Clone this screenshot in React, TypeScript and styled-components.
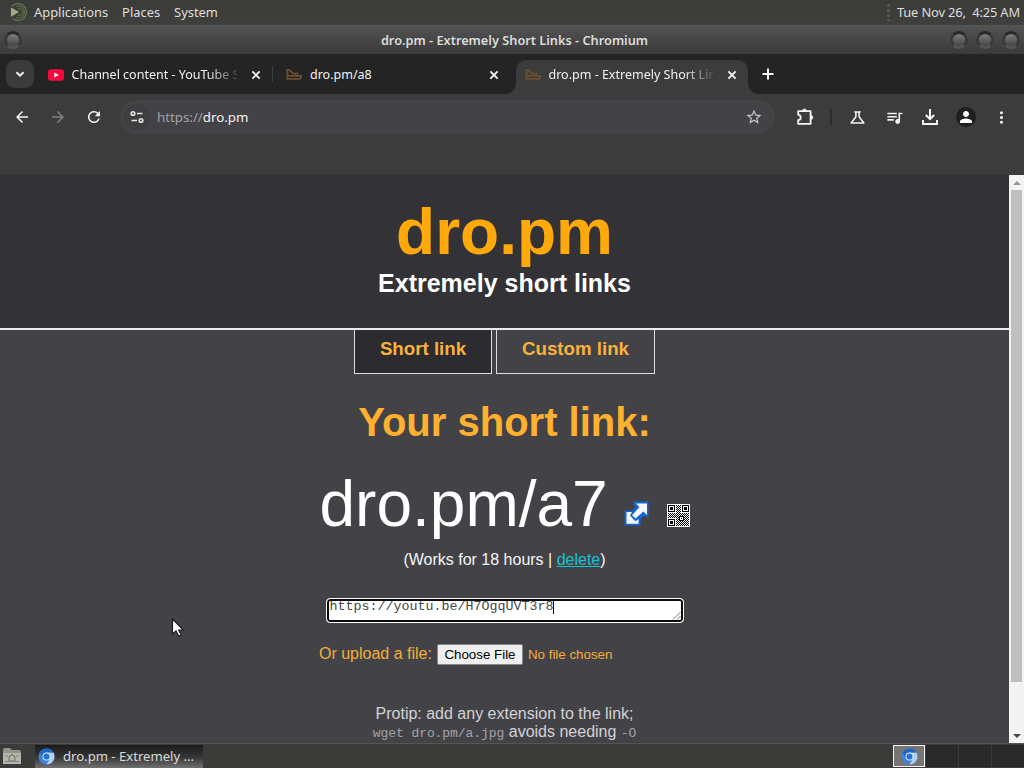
import React from "react";
import styled, { createGlobalStyle } from "styled-components";
import {
  MdArrowBack,
  MdArrowForward,
  MdRefresh,
  MdStarBorder,
  MdOutlineScience,
  MdQueueMusic,
  MdPerson,
  MdMoreVert,
} from "react-icons/md";

const GlobalStyle = createGlobalStyle`
  * { box-sizing: border-box; }
  html, body { margin: 0; padding: 0; }
  body { overflow: hidden; background: #3c3c3c; }
`;

const Desktop = styled.div`
  position: relative;
  display: flex;
  flex-direction: column;
  width: 1024px;
  height: 768px;
  overflow: hidden;
  font-family: "Noto Sans", sans-serif;
  font-size: 13.33px;
  color: #f2f2f2;
`;

const TopPanel = styled.header`
  display: flex;
  align-items: center;
  flex: 0 0 25px;
  padding: 0 4px 1px 9px;
  background: linear-gradient(#3b3b39, #3f3f3d);
  color: #dededc;
  font-size: 12.9px;
  white-space: pre;
`;

const MenuItem = styled.span<{ $gap: number }>`
  margin-left: ${(p) => p.$gap}px;
  line-height: 24px;
`;

const Handle = styled.span`
  width: 3px;
  height: 17px;
  margin-left: auto;
  margin-right: 7px;
  background: repeating-linear-gradient(#555553 0 3px, #3c3c3a 3px 5px);
`;

const Clock = styled.span`
  letter-spacing: -0.15px;
`;

const TitleBar = styled.div`
  display: flex;
  align-items: center;
  justify-content: space-between;
  flex: 0 0 29px;
  padding: 0 4px 0 4px;
  background: linear-gradient(#545454, #494949 40%, #3a3a3a);
  color: #dcdcdc;
  font-size: 12.75px;
  font-weight: 600;
`;

const TitleSide = styled.div<{ $end?: boolean }>`
  display: flex;
  width: 110px;
  gap: 8px;
  justify-content: ${(p) => (p.$end ? "flex-end" : "flex-start")};
  margin-right: ${(p) => (p.$end ? 0 : 5)}px;
`;

const Orb = styled.span`
  width: 18px;
  height: 18px;
  border-radius: 50%;
  border: 3px solid #3a3a3a;
  border-top-color: #282828;
  border-bottom-color: #555;
  background: linear-gradient(#7e7e7c, #444);
`;

const TabStrip = styled.nav`
  display: flex;
  align-items: flex-end;
  flex: 0 0 40px;
  padding-left: 6px;
  background: #242424;
`;

const TabSearch = styled.div`
  display: grid;
  place-items: center;
  width: 28px;
  height: 28px;
  margin-bottom: 6px;
  border-radius: 9px;
  background: #3b3b3b;
`;

const Tab = styled.div<{ $active?: boolean; $width: number; $left: number }>`
  position: relative;
  display: flex;
  align-items: center;
  width: ${(p) => p.$width}px;
  height: 34px;
  margin-left: ${(p) => p.$left}px;
  padding: 0 9px 5px;
  border-radius: 10px 10px 0 0;
  background: ${(p) => (p.$active ? "#3c3c3c" : "transparent")};
  font-size: 12.5px;

  &::before,
  &::after {
    content: "";
    display: ${(p) => (p.$active ? "block" : "none")};
    position: absolute;
    bottom: 0;
    width: 10px;
    height: 10px;
  }
  &::before {
    left: -10px;
    background: radial-gradient(circle at 0 0, #242424 9.5px, #3c3c3c 10px);
  }
  &::after {
    right: -10px;
    background: radial-gradient(circle at 100% 0, #242424 9.5px, #3c3c3c 10px);
  }
`;

const TabLabel = styled.span<{ $fade?: boolean }>`
  flex: 1;
  min-width: 0;
  margin: 0 12px 0 ${(p) => (p.$fade ? 7.5 : 8)}px;
  overflow: hidden;
  white-space: nowrap;
  line-height: 20px;
  ${(p) => p.$fade && "mask-image: linear-gradient(to right, #000 82%, transparent 103%);"}
`;

const TabDivider = styled.span`
  width: 1px;
  height: 16px;
  margin-bottom: 12px;
  background: #3d3d3d;
`;

const NewTab = styled.div`
  display: grid;
  margin: 0 0 14px 14px;
`;

const Toolbar = styled.div`
  display: flex;
  align-items: center;
  flex: 0 0 46px;
  padding-left: 13px;
  background: #3c3c3c;

  & > svg { flex: none; }
`;

const NavIcons = styled.div`
  display: flex;
  gap: 18px;
  color: #f4f4f4;
  & > :nth-child(2) { color: #808080; }
`;

const AddressBar = styled.div`
  display: flex;
  align-items: center;
  width: 655px;
  height: 34px;
  margin-left: 17px;
  padding: 0 12px 0 4px;
  border-radius: 17px;
  background: #434347;
  font-size: 13.3px;
`;

const SiteInfo = styled.span`
  display: grid;
  place-items: center;
  width: 26px;
  height: 26px;
  margin-right: 7px;
  border-radius: 50%;
  background: #3e3e40;
`;

const Scheme = styled.span`
  color: #a2a2a4;
`;

const StarSlot = styled.span`
  display: grid;
  margin-left: auto;
  color: #c8c8cc;
`;

const ToolIcons = styled.div`
  display: flex;
  align-items: center;
  gap: 17.5px;
  margin-left: 16px;
`;

const ExtSlot = styled.span`
  display: grid;
  margin-left: 21px;
`;

const ToolDivider = styled.span`
  width: 2px;
  height: 16px;
  margin-left: 16px;
  background: #2c2c2c;
`;

const Avatar = styled.span`
  display: grid;
  place-items: center;
  width: 20px;
  height: 20px;
  margin: 0 -1px;
  border-radius: 50%;
  background: #1f1f1f;
  color: #fff;
`;

const BookmarkSpace = styled.div`
  flex: 0 0 34px;
  background: #3c3c3c;
`;

const Viewport = styled.div`
  display: flex;
  flex: 0 0 569px;
  overflow: hidden;
`;

const Page = styled.main`
  width: 1009px;
  background: #434347;
  font-family: "Liberation Sans", Arial, sans-serif;
  font-size: 16px;
  text-align: center;
  overflow: hidden;
`;

const Banner = styled.section`
  height: 156px;
  padding-top: 21px;
  border-bottom: 2px solid #ececee;
  background: #323237;
`;

const SiteName = styled.h1`
  margin: 0;
  color: #ffa90a;
  font-size: 64px;
  line-height: 74px;
`;

const Tagline = styled.h2`
  margin: 0;
  color: #fff;
  font-size: 25px;
  line-height: 29px;
`;

const ModeTabs = styled.div`
  display: flex;
  justify-content: center;
  gap: 4px;
  height: 44px;
`;

const ModeTab = styled.div<{ $selected?: boolean; $width: number }>`
  width: ${(p) => p.$width}px;
  height: 44px;
  border: 1px solid #dcdce0;
  border-top: 0;
  background: ${(p) => (p.$selected ? "#2b2b30" : "transparent")};
  color: #f9b13c;
  font-size: 18.72px;
  font-weight: bold;
  line-height: 38px;
`;

const ResultTitle = styled.h2`
  margin: 24px 0 0;
  color: #ffb02e;
  font-size: 40px;
  line-height: 48px;
`;

const LinkRow = styled.div`
  display: flex;
  align-items: flex-start;
  width: 370px;
  margin: 21px auto 0;
  height: 74px;
  color: #fff;
  font-size: 64px;
  line-height: 74px;
`;

const OpenSlot = styled.span`
  display: grid;
  margin: 33px 18px 0 16px;
`;

const QrSlot = styled.span`
  display: grid;
  margin-top: 37px;
`;

const Expiry = styled.p`
  margin: 9px 0 0;
  color: #f5f5f7;
  line-height: 20px;
`;

const DeleteLink = styled.span`
  color: #14c3d0;
  text-decoration: underline;
`;

const UrlField = styled.div`
  position: relative;
  display: flex;
  width: 358px;
  height: 25px;
  margin: 28px auto 0;
  padding: 0 2px 0 3px;
  border: 1px solid #fff;
  border-radius: 4px;
  background: #fff;
  box-shadow: inset 0 0 0 2px #0c0c0e;
  color: #484848;
  font-family: "Liberation Mono", monospace;
  font-size: 13.33px;
  line-height: 15px;
`;

const Caret = styled.span`
  width: 1px;
  height: 13px;
  margin-top: 2px;
  background: #000;
`;

const Grip = styled.svg`
  position: absolute;
  right: 2px;
  bottom: 2px;
`;

const UploadRow = styled.div`
  display: flex;
  align-items: center;
  width: 371px;
  height: 22px;
  margin: 20px auto 0;
  color: #f3ad38;
`;

const FileButton = styled.span`
  width: 86px;
  height: 21px;
  margin: 1px 5px 0 5px;
  border: 1px solid #88888a;
  border-radius: 2px;
  background: #efefef;
  color: #000;
  font-size: 13.33px;
  line-height: 19px;
`;

const FileStatus = styled.span`
  margin-top: 1px;
  font-size: 13.33px;
`;

const Protip = styled.p`
  margin: 40px 0 0;
  color: #d2d2d6;
  line-height: 18px;
`;

const Code = styled.code`
  color: #a2a2a6;
  font-family: "Liberation Mono", monospace;
  font-size: 13px;
  letter-spacing: -0.06px;
`;

const Scrollbar = styled.aside`
  display: flex;
  flex-direction: column;
  align-items: center;
  justify-content: space-between;
  width: 15px;
  margin-top: 1px;
  background: #f3f3f3;
`;

const Thumb = styled.div`
  width: 11px;
  height: 492px;
  margin-bottom: auto;
  background: #bfbfbf;
`;

const ScrollArrow = styled.div<{ $down?: boolean }>`
  display: grid;
  place-items: center;
  width: 15px;
  height: 15px;
  &::after {
    content: "";
    border: 4px solid transparent;
    border-top-width: ${(p) => (p.$down ? 4 : 0)}px;
    border-bottom-width: ${(p) => (p.$down ? 0 : 4)}px;
    border-top-color: #444;
    border-bottom-color: #999;
  }
`;

const BottomPanel = styled.footer`
  display: flex;
  align-items: center;
  flex: 0 0 25px;
  padding-left: 2px;
  border-top: 1px solid #555553;
  background: #3b3b39;
`;

const TaskButton = styled.div`
  display: flex;
  align-items: center;
  gap: 8px;
  width: 168px;
  height: 23px;
  margin-left: 13px;
  padding-left: 3px;
  background: linear-gradient(#1c1c1c, #333 50%, #707070);
  color: #d9d9d9;
  font-size: 13.1px;
  white-space: nowrap;
`;

const Pager = styled.div`
  display: flex;
  align-items: center;
  gap: 1px;
  margin-left: auto;
  height: 24px;
  background: #3a3a3a;
`;

const Workspace = styled.div<{ $current?: boolean }>`
  display: grid;
  place-items: center;
  width: 32px;
  height: 22px;
  border: ${(p) => (p.$current ? "1px solid #f5f5f5" : "0")};
  background: ${(p) => (p.$current ? "#777573" : "#292929")};
`;

const Pointer = styled.svg`
  position: absolute;
  left: 171px;
  top: 618px;
`;

const MateLogo = () => (
  <svg width="20" height="20" viewBox="0 0 20 20" fill="none">
    <path d="M3 4 A8.5 8.5 0 1 1 4 17" stroke="#64774b" strokeWidth="1.2" />
    <path d="M7 4.5 A6 6 0 1 1 7 15.5" stroke="#596b43" strokeWidth="1.3" />
    <path d="M9 7 A3.4 3.4 0 1 1 9 13.2" stroke="#64774b" strokeWidth="1" />
    <path d="M2 5.5 L10 10 L2 14.8 Z" fill="#a4ab82" />
  </svg>
);

const ChevronIcon = () => (
  <svg width="10" height="10" viewBox="0 0 10 10" fill="none" stroke="#f2f2f2" strokeWidth="2">
    <path d="M1.5 3.2 L5 6.7 L8.5 3.2" />
  </svg>
);

const CloseIcon = () => (
  <svg width="14" height="14" viewBox="0 0 14 14" fill="none" stroke="#f4f4f4" strokeWidth="1.9">
    <path d="M3.4 3.4 L10.6 10.6 M10.6 3.4 L3.4 10.6" />
  </svg>
);

const PlusIcon = () => (
  <svg width="12" height="12" viewBox="0 0 12 12" fill="none" stroke="#f4f4f4" strokeWidth="2">
    <path d="M6 0.5 V11.5 M0.5 6 H11.5" />
  </svg>
);

const PuzzleIcon = () => (
  <svg width="18" height="18" viewBox="0 0 18 18" fill="none" stroke="#f5f5f5" strokeWidth="1.8">
    <path
      d="M2.2 3.2 H14.6 V15.8 H2.2 V12.2 C5.6 11.8 5.6 7.2 2.2 6.8 Z"
      strokeLinejoin="round"
    />
    <path d="M6.3 3 A2.1 2.1 0 0 1 10.5 3 Z M14.8 7.4 A2.1 2.1 0 0 1 14.8 11.6 Z" fill="#f5f5f5" strokeWidth="0.5" />
  </svg>
);

const YouTubeIcon = () => (
  <svg width="16" height="16" viewBox="0 0 16 16">
    <rect x="0" y="2.3" width="16" height="11.4" rx="3" fill="#f5093c" />
    <path d="M6.3 5.4 L10.8 8 L6.3 10.6 Z" fill="#fff" />
  </svg>
);

const DroIcon = () => (
  <svg width="16" height="16" viewBox="0 0 16 16" fill="none" stroke="#6a5032" strokeWidth="1.8">
    <path d="M0 3.2 H3.5 L7.5 6.6 H11 L12.5 6" />
    <path d="M1.4 3.5 V11.8 H14.5 M2 8.8 H16 M14.8 8.6 V12" />
  </svg>
);

const TuneIcon = () => (
  <svg width="16" height="16" viewBox="0 0 16 16" fill="none" stroke="#e6e6e6" strokeWidth="1.6">
    <circle cx="4" cy="4.5" r="1.8" />
    <path d="M8 4.5 H13.5 M2.5 11.5 H8" />
    <circle cx="12" cy="11.5" r="1.8" />
  </svg>
);

const DownloadIcon = () => (
  <svg width="18" height="18" viewBox="0 0 18 18" fill="none" stroke="#f5f5f5" strokeWidth="2">
    <path d="M9 1 V11 M4.8 7 L9 11.2 L13.2 7 M2 12 V16 H16 V12" />
  </svg>
);

const OpenIcon = () => (
  <svg width="25" height="27" viewBox="0 0 25 27">
    <path
      d="M9 2 H24 V17 L20 15 L16 19 V25 H1 V11 H8 L12 7 Z"
      fill="#1464d2"
      stroke="#1464d2"
      strokeLinejoin="round"
    />
    <path d="M2.5 12 H8 L6 15.5 L10.5 20.5 L12 21 L14.5 19 V23.8 H2.5 Z" fill="#f4faff" />
    <path d="M12 3.5 H23 V15 L19.4 11.5 L11.5 18.6 L8 15.2 L15.4 7.2 Z" fill="#f4faff" />
  </svg>
);

const QR_SIZE = 23;
const inSquare = (x: number, y: number, left: number, top: number, size: number) =>
  x >= left && x < left + size && y >= top && y < top + size;
const ringDark = (x: number, y: number, left: number, top: number, size: number) => {
  const edge = Math.min(x - left, y - top, left + size - 1 - x, top + size - 1 - y);
  return edge === 0 || edge > 1;
};

const qrDark = (x: number, y: number) => {
  if (x === 0 || y === 0 || x === QR_SIZE - 1 || y === QR_SIZE - 1) return false;
  const finders = [
    [1, 1],
    [15, 1],
    [1, 15],
  ];
  for (const [l, t] of finders) {
    if (inSquare(x, y, l, t, 7)) return ringDark(x, y, l, t, 7);
    if (inSquare(x, y, l - 1, t - 1, 9)) return false;
  }
  if (inSquare(x, y, 12, 12, 5)) return ringDark(x, y, 12, 12, 5);
  return (x + y) % 2 === 0;
};

const QrIcon = () => (
  <svg width="23" height="23" viewBox="0 0 23 23" shapeRendering="crispEdges">
    <rect width="23" height="23" fill="#fff" />
    {Array.from({ length: QR_SIZE * QR_SIZE }, (_, i) => [i % QR_SIZE, Math.floor(i / QR_SIZE)])
      .filter(([x, y]) => qrDark(x, y))
      .map(([x, y]) => (
        <rect key={`${x}-${y}`} x={x} y={y} width="1" height="1" fill="#000" />
      ))}
  </svg>
);

const ChromiumIcon = () => (
  <svg width="17" height="17" viewBox="0 0 17 17">
    <circle cx="8.5" cy="8.5" r="8" fill="#3f82d8" />
    <path d="M8.5 4.6 H15.5 A8 8 0 0 1 8.5 16.5 L12 10.5 Z" fill="#b2d0f5" />
    <path d="M1.6 4.5 A8 8 0 0 1 15.5 4.6 H8.5 L5 10.5 Z" fill="#2266c4" />
    <circle cx="8.5" cy="8.5" r="4" fill="#e6f0fc" />
    <circle cx="8.5" cy="8.5" r="3.1" fill="#2372d5" />
  </svg>
);

const FilesIcon = () => (
  <svg width="20" height="18" viewBox="0 0 20 18">
    <path d="M1 3 Q1 1 3 1 H8 L10 3 H17 Q19 3 19 5 V17 H1 Z" fill="#92948a" />
    <path d="M1 6 H19 V17 H1 Z" fill="#b4b6aa" />
    <path d="M7 14 V10 L10 7.5 L13 10 V14 Z" fill="none" stroke="#77796f" strokeWidth="1.2" />
    <path d="M3 9 H6 M3 14.5 H17 M14 9 H17" stroke="#85877c" />
  </svg>
);

export default function App() {
  return (
    <Desktop>
      <GlobalStyle />
      <TopPanel>
        <MateLogo />
        <MenuItem $gap={5}>Applications</MenuItem>
        <MenuItem $gap={14}>Places</MenuItem>
        <MenuItem $gap={14}>System</MenuItem>
        <Handle />
        <Clock>Tue Nov 26,  4:25 AM</Clock>
      </TopPanel>

      <TitleBar>
        <TitleSide>
          <Orb />
        </TitleSide>
        <span>dro.pm - Extremely Short Links - Chromium</span>
        <TitleSide $end>
          <Orb />
          <Orb />
          <Orb />
        </TitleSide>
      </TitleBar>

      <TabStrip>
        <TabSearch>
          <ChevronIcon />
        </TabSearch>
        <Tab $width={233} $left={5}>
          <YouTubeIcon />
          <TabLabel $fade>Channel content - YouTube S</TabLabel>
          <CloseIcon />
        </Tab>
        <TabDivider />
        <Tab $width={233} $left={4}>
          <DroIcon />
          <TabLabel>dro.pm/a8</TabLabel>
          <CloseIcon />
        </Tab>
        <Tab $active $width={232} $left={6}>
          <DroIcon />
          <TabLabel $fade>dro.pm - Extremely Short Links</TabLabel>
          <CloseIcon />
        </Tab>
        <NewTab>
          <PlusIcon />
        </NewTab>
      </TabStrip>

      <Toolbar>
        <NavIcons>
          <MdArrowBack size={18} />
          <MdArrowForward size={18} />
          <MdRefresh size={18} />
        </NavIcons>
        <AddressBar>
          <SiteInfo>
            <TuneIcon />
          </SiteInfo>
          <Scheme>https://</Scheme>
          <span>dro.pm</span>
          <StarSlot>
            <MdStarBorder size={18} />
          </StarSlot>
        </AddressBar>
        <ExtSlot>
          <PuzzleIcon />
        </ExtSlot>
        <ToolDivider />
        <ToolIcons>
          <MdOutlineScience size={19} />
          <MdQueueMusic size={19} />
          <DownloadIcon />
          <Avatar>
            <MdPerson size={18} />
          </Avatar>
          <MdMoreVert size={19} />
        </ToolIcons>
      </Toolbar>
      <BookmarkSpace />

      <Viewport>
        <Page>
          <Banner>
            <SiteName>dro.pm</SiteName>
            <Tagline>Extremely short links</Tagline>
          </Banner>
          <ModeTabs>
            <ModeTab $selected $width={138}>
              Short link
            </ModeTab>
            <ModeTab $width={159}>Custom link</ModeTab>
          </ModeTabs>
          <ResultTitle>Your short link:</ResultTitle>
          <LinkRow>
            <span>dro.pm/a7</span>
            <OpenSlot>
              <OpenIcon />
            </OpenSlot>
            <QrSlot>
              <QrIcon />
            </QrSlot>
          </LinkRow>
          <Expiry>
            (Works for 18 hours | <DeleteLink>delete</DeleteLink>)
          </Expiry>
          <UrlField>
            <span>https://youtu.be/H7OgqUVT3r8</span>
            <Caret />
            <Grip width="9" height="9" viewBox="0 0 9 9" stroke="#777">
              <path d="M1 8.5 L8.5 1 M5 8.5 L8.5 5" />
            </Grip>
          </UrlField>
          <UploadRow>
            <span>Or upload a file:</span>
            <FileButton>Choose File</FileButton>
            <FileStatus>No file chosen</FileStatus>
          </UploadRow>
          <Protip>
            Protip: add any extension to the link;
            <br />
            <Code>wget dro.pm/a.jpg</Code> avoids needing <Code>-O</Code>
          </Protip>
        </Page>
        <Scrollbar>
          <ScrollArrow />
          <Thumb />
          <ScrollArrow $down />
        </Scrollbar>
      </Viewport>

      <BottomPanel>
        <FilesIcon />
        <TaskButton>
          <ChromiumIcon />
          <span>dro.pm - Extremely ...</span>
        </TaskButton>
        <Pager>
          <Workspace $current>
            <ChromiumIcon />
          </Workspace>
          <Workspace />
          <Workspace />
          <Workspace />
        </Pager>
      </BottomPanel>

      <Pointer width="14" height="20" viewBox="0 0 14 20">
        <path
          d="M1.5 1 V16 L5 12.8 L7.8 18.3 L10.2 17 L7.6 12 H12.3 Z"
          fill="#fff"
          stroke="#161616"
          strokeWidth="1.1"
        />
      </Pointer>
    </Desktop>
  );
}
